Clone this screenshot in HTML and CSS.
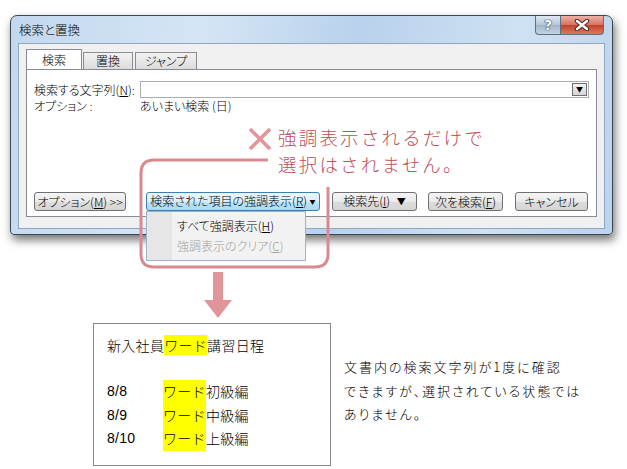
FILE: index.html
```html
<!DOCTYPE html>
<html>
<head>
    <meta charset="utf-8">
    <title>検索と置換</title>
    <link rel="stylesheet" href="styles.css">
</head>
<body>
    <div class="page">
        <div class="window">
            <div class="titlebar">
                <span class="title">検索と置換</span>
                <div class="caption-buttons">
                    <div class="cap-btn help">?</div>
                    <div class="cap-btn close">
                        <svg width="16" height="12" viewBox="0 0 16 12">
                            <path d="M3 2 L13 10 M13 2 L3 10" stroke="#4a2a26" stroke-width="4.5" stroke-linecap="round"/>
                            <path d="M3 2 L13 10 M13 2 L3 10" stroke="#ffffff" stroke-width="2.5" stroke-linecap="round"/>
                        </svg>
                    </div>
                </div>
            </div>
            <div class="client">
                <div class="tabs">
                    <div class="tab active">検索</div>
                    <div class="tab">置換</div>
                    <div class="tab">ジャンプ</div>
                </div>
                <div class="panel">
                    <div class="row">
                        <label class="field-label" for="findText">検索する文字列(<u>N</u>):</label>
                        <div class="combo" id="findText">
                            <span class="combo-btn">▼</span>
                        </div>
                    </div>
                    <div class="row">
                        <span class="field-label">オプション :</span>
                        <span>あいまい検索 (日)</span>
                    </div>
                    <div class="buttons">
                        <button class="btn btn-options">オプション(<u>M</u>) &gt;&gt;</button>
                        <button class="btn btn-highlight active">検索された項目の強調表示(<u>R</u>) <span class="caret">▼</span></button>
                        <button class="btn btn-target">検索先(<u>I</u>) <span class="caret big">▼</span></button>
                        <button class="btn btn-next">次を検索(<u>F</u>)</button>
                        <button class="btn btn-cancel">キャンセル</button>
                    </div>
                </div>
            </div>
        </div>

        <!-- dropdown of the highlight button -->
        <div class="menu">
            <div class="menu-item">すべて強調表示(<u>H</u>)</div>
            <div class="menu-item disabled">強調表示のクリア(<u>C</u>)</div>
        </div>

        <!-- pink annotation frame -->
        <svg class="callout" width="627" height="469" viewBox="0 0 627 469">
            <path d="M268 160 L154 160 Q141 160 141 173 L141 254 Q141 267 154 267 L315 267 Q328 267 328 254 L328 187"
                  fill="none" stroke="#d98a90" stroke-width="3"/>
            <path d="M250 129 L270 149 M270 129 L250 149" stroke="#e39499" stroke-width="3.5"/>
        </svg>
        <div class="callout-text">
            <div>強調表示されるだけで</div>
            <div>選択はされません。</div>
        </div>

        <div class="arrow">
            <svg width="30" height="50" viewBox="0 0 30 50">
                <rect x="10" y="0" width="10" height="30" fill="#e0959a"/>
                <path d="M1 28 L29 28 L15 46 Z" fill="#e0959a"/>
            </svg>
        </div>

        <div class="result">
            <div class="doc">
                <p class="doc-title">新入社員<span class="hl">ワード</span>講習日程</p>
                <div class="doc-row"><span class="date">8/8</span><span class="hl">ワード</span>初級編</div>
                <div class="doc-row"><span class="date">8/9</span><span class="hl">ワード</span>中級編</div>
                <div class="doc-row"><span class="date">8/10</span><span class="hl">ワード</span>上級編</div>
            </div>
            <p class="note">文書内の検索文字列が1度に確認<br>できますが、選択されている状態では<br>ありません。</p>
        </div>
    </div>
</body>
</html>
```

FILE: styles.css
```css
body {
    margin: 0;
    background: #ffffff;
    font-family: "Noto Sans CJK JP", sans-serif;
    font-weight: 300;
}

.page {
    position: relative;
    width: 627px;
    height: 469px;
    overflow: hidden;
    padding-top: 15px;
    box-sizing: border-box;
}

/* dialog window */
.window {
    margin-left: 10px;
    width: 603px;
    height: 220px;
    box-sizing: border-box;
    padding: 0 7px 6px;
    border: 1px solid #3d4650;
    border-radius: 7px 7px 4px 4px;
    background: linear-gradient(100deg, #c2d8ef 0%, #d5e5f5 30%, #b9d1ec 55%, #cfe1f3 80%, #bcd3ed 100%);
    box-shadow: 2px 5px 10px rgba(0, 0, 0, 0.55);
    font-size: 12px;
    font-feature-settings: "palt";
    color: #000;
}

.titlebar {
    height: 27px;
    display: flex;
    justify-content: space-between;
    align-items: flex-start;
}

.title {
    margin-top: 4px;
    margin-left: 1px;
    font-size: 12.5px;
}

.caption-buttons {
    display: flex;
    margin-right: 1px;
}

.cap-btn {
    height: 19px;
    border: 1px solid #5e6f82;
    border-top: none;
    display: flex;
    align-items: center;
    justify-content: center;
    box-sizing: border-box;
}

.help {
    width: 26px;
    border-radius: 0 0 0 4px;
    background: linear-gradient(#dfe8f1, #b6c6d6 50%, #a3b6c9 51%, #c3d3e2);
    color: #f4f8fb;
    font-family: "DejaVu Sans", sans-serif;
    font-weight: bold;
    font-size: 14px;
    text-shadow: 0 0 1px #3a4a5c, 0 0 1px #3a4a5c, 0 0 1px #3a4a5c;
}

.close {
    width: 43px;
    border-left: none;
    border-radius: 0 0 4px 0;
    background: linear-gradient(#eeb1a6, #d7715f 50%, #c1412a 51%, #d77a5d);
}

.client {
    height: 186px;
    box-sizing: border-box;
    padding: 6px 7px 11px;
    border: 1px solid #8ea7c2;
    background: #f0f0f0;
    display: flex;
    flex-direction: column;
}

/* tabs */
.tabs {
    display: flex;
    align-items: flex-end;
    height: 19px;
    position: relative;
    z-index: 1;
}

.tab {
    height: 16px;
    line-height: 15px;
    padding: 0 14px;
    border: 1px solid #898c95;
    border-bottom: none;
    background: linear-gradient(#f2f2f2, #dcdcdc);
    margin-left: -1px;
    font-size: 12px;
}

.tab.active {
    height: 19px;
    line-height: 19px;
    padding: 0 15px;
    margin-left: 0;
    margin-right: 2px;
    background: #ffffff;
}

.tab:nth-child(2) {
    padding: 0 12px;
}

.tab:nth-child(3) {
    margin-left: 2px;
    padding: 0 9px;
}

.panel {
    flex: 1;
    border: 1px solid #898c95;
    background: #ffffff;
    padding: 11px 7px 5px;
    display: flex;
    flex-direction: column;
}

.row {
    display: flex;
    align-items: center;
    height: 17px;
}

.row + .row {
    height: 15px;
}

.field-label {
    width: 106px;
    flex: none;
}

.combo {
    flex: 1;
    height: 17px;
    box-sizing: border-box;
    border: 1px solid #abadb3;
    background: #ffffff;
    display: flex;
    justify-content: flex-end;
    align-items: center;
    padding-right: 1px;
}

.combo-btn {
    width: 15px;
    height: 13px;
    box-sizing: border-box;
    border: 1px solid #707070;
    background: linear-gradient(#f2f2f2, #d4d4d4);
    font-size: 7px;
    line-height: 11px;
    text-align: center;
    color: #000;
}

/* bottom buttons */
.buttons {
    margin-top: auto;
    display: flex;
}

.btn {
    height: 19px;
    box-sizing: border-box;
    padding: 0;
    border: 1px solid #707070;
    border-radius: 3px;
    background: linear-gradient(#f4f4f4, #eaeaea 50%, #dcdcdc 51%, #d6d6d6);
    font-family: "Noto Sans CJK JP", sans-serif;
    font-weight: 300;
    font-size: 12px;
    font-feature-settings: "palt";
    line-height: 16px;
    color: #000;
}

.btn.active {
    border-color: #3c7fb1;
    background: linear-gradient(#eaf6fd, #d9f0fc 50%, #bee6fd 51%, #a7d9f5);
}

.btn-options { width: 92px; }
.btn-highlight { width: 174px; margin-left: 20px; }
.btn-target { width: 85px; margin-left: 12px; }
.btn-next { width: 75px; margin-left: 11px; }
.btn-cancel { width: 73px; margin-left: 12px; }

.caret {
    font-size: 6px;
    vertical-align: 2px;
}

.caret.big {
    font-size: 9px;
    vertical-align: 1px;
    margin-left: 4px;
}

/* dropdown menu */
.menu {
    position: absolute;
    left: 146px;
    top: 211px;
    width: 160px;
    height: 50px;
    box-sizing: border-box;
    border: 1px solid #97b3cf;
    background: linear-gradient(90deg, #e6e6e6 0, #e6e6e6 25px, #f2f2f2 25px);
    font-size: 12px;
    font-feature-settings: "palt";
    padding-top: 4px;
}

.menu-item {
    height: 20px;
    line-height: 20px;
    padding-left: 30px;
}

.menu-item.disabled {
    color: #a0a0a0;
}

/* annotation */
.callout {
    position: absolute;
    left: 0;
    top: 0;
    pointer-events: none;
}

.callout-text {
    position: absolute;
    left: 278px;
    top: 124px;
    font-size: 18.5px;
    line-height: 26.5px;
    letter-spacing: 2.2px;
    color: #be4d59;
}

.arrow {
    height: 88px;
    padding-left: 203px;
    padding-top: 37px;
    box-sizing: border-box;
}

.arrow svg {
    display: block;
}

/* document sample */
.result {
    display: flex;
    align-items: flex-start;
    margin-left: 93px;
}

.doc {
    width: 238px;
    height: 143px;
    box-sizing: border-box;
    border: 1px solid #8a8a8a;
    padding: 10px 0 0 13px;
    font-size: 14px;
    letter-spacing: 0.3px;
}

.doc-title {
    margin: 0 0 24px;
    line-height: 22px;
}

.doc-row {
    line-height: 23.5px;
    display: flex;
}

.date {
    width: 56px;
    font-family: "Liberation Sans", sans-serif;
    font-weight: 400;
    font-size: 14px;
}

.hl {
    background: #ffff00;
}

.note {
    margin: 32px 0 0 13px;
    font-size: 13px;
    line-height: 23.5px;
    letter-spacing: 2px;
    font-feature-settings: "palt";
}
```
